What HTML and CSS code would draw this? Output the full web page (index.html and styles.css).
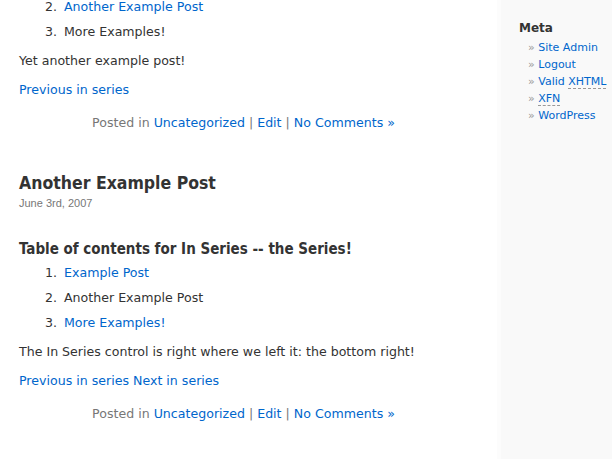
FILE: index.html
```
<!DOCTYPE html>
<html lang="en">
<head>
    <meta charset="UTF-8">
    <title>In Series</title>
    <link rel="stylesheet" href="styles.css">
</head>
<body>
    <div class="page">
        <div class="content">
            <div class="post post-partial">
                <div class="entry">
                    <!-- page is scrolled: item 1 is above the fold -->
                    <ol class="series-toc" start="2">
                        <li><a href="#">Another Example Post</a></li>
                        <li>More Examples!</li>
                    </ol>
                    <p>Yet another example post!</p>
                    <p class="series-nav"><a href="#">Previous in series</a></p>
                </div>
                <p class="postmetadata">Posted in <a href="#">Uncategorized</a> | <a href="#">Edit</a> | <a href="#">No Comments &raquo;</a></p>
            </div>

            <div class="post">
                <h2 class="post-title">Another Example Post</h2>
                <small class="post-date">June 3rd, 2007</small>
                <div class="entry">
                    <h3 class="toc-title">Table of contents for In Series -- the Series!</h3>
                    <ol class="series-toc">
                        <li><a href="#">Example Post</a></li>
                        <li>Another Example Post</li>
                        <li><a href="#">More Examples!</a></li>
                    </ol>
                    <p>The In Series control is right where we left it: the bottom right!</p>
                    <p class="series-nav"><a href="#">Previous in series</a> <a href="#">Next in series</a></p>
                </div>
                <p class="postmetadata">Posted in <a href="#">Uncategorized</a> | <a href="#">Edit</a> | <a href="#">No Comments &raquo;</a></p>
            </div>
        </div>

        <div class="sidebar">
            <h2 class="widget-title">Meta</h2>
            <ul class="widget-list">
                <li><a href="#">Site Admin</a></li>
                <li><a href="#">Logout</a></li>
                <li><a href="#">Valid <abbr title="eXtensible HyperText Markup Language">XHTML</abbr></a></li>
                <li><a href="#"><abbr title="XHTML Friends Network">XFN</abbr></a></li>
                <li><a href="#">WordPress</a></li>
            </ul>
        </div>
    </div>
</body>
</html>
```
FILE: styles.css
```
html, body {
    margin: 0;
    padding: 0;
    height: 100%;
    overflow: hidden;
}

body {
    font-family: "DejaVu Sans", Verdana, sans-serif;
    color: #333;
    background: #fff;
}

a {
    color: #06c;
    text-decoration: none;
}

.page {
    display: flex;
    height: 100%;
}

/* main column */
.content {
    width: 449px;
    flex: none;
    padding: 0 29px 0 19px;
    margin-top: -2px;
    font-size: 12.6px;
}

.entry p {
    margin: 11px 0;
    line-height: 18px;
}

.series-toc {
    margin: 0 0 11px;
    padding-left: 42px;
}

.series-toc li {
    padding-left: 3px;
    line-height: 18px;
    margin-bottom: 7px;
}

.series-toc li:last-child {
    margin-bottom: 0;
}

.entry .series-nav {
    margin-bottom: 15px;
}

.postmetadata {
    margin: 0;
    line-height: 18px;
    text-align: center;
    color: #777;
}

.post-partial {
    margin-bottom: 40px;
}

.post-title {
    margin: 0;
    font-family: "DejaVu Sans Condensed", "DejaVu Sans", sans-serif;
    font-size: 17.5px;
    line-height: 22px;
    color: #333;
}

.post-date {
    display: block;
    margin-top: 2px;
    font-family: "Liberation Sans", Arial, sans-serif;
    font-size: 11px;
    line-height: 14px;
    color: #777;
}

.toc-title {
    margin: 29px 0 5px;
    font-family: "DejaVu Sans Condensed", "DejaVu Sans", sans-serif;
    font-size: 15px;
    line-height: 20px;
    color: #333;
}

/* sidebar */
.sidebar {
    flex: 1;
    min-width: 0;
    overflow: hidden;
    white-space: nowrap;
    background: #f9f9f9;
    border-left: 4px solid #fcfcfc;
    padding: 20px 0 0 18px;
}

.widget-title {
    margin: 0 0 3px;
    font-size: 12px;
    line-height: 16px;
    color: #333;
}

.widget-list {
    list-style: none;
    margin: 0 0 0 9px;
    padding: 0;
    font-size: 11px;
}

.widget-list li {
    line-height: 17px;
}

.widget-list li:before {
    content: "\00BB\0020";
    color: #999;
}

abbr {
    text-decoration: none;
    border-bottom: 1px dashed #999;
}
```
